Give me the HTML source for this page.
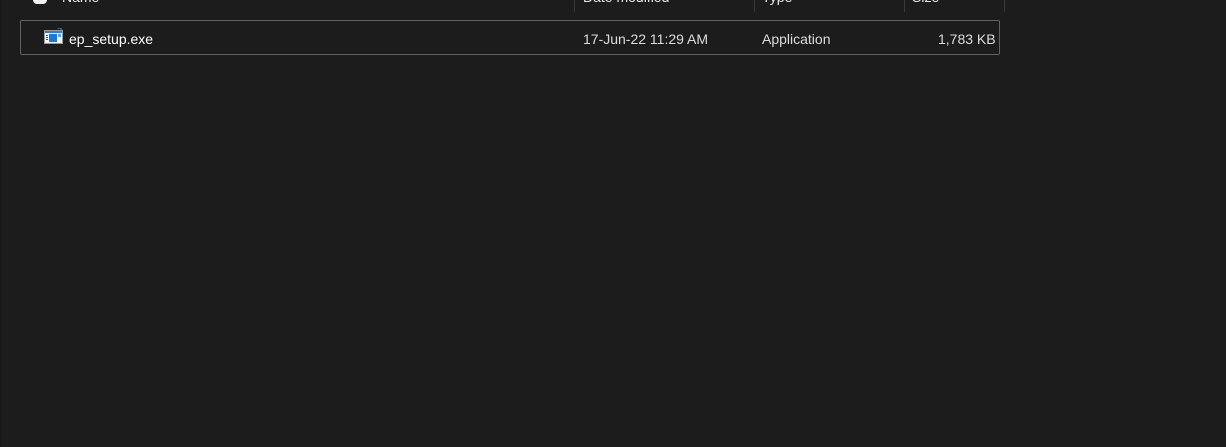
<!DOCTYPE html>
<html><head><style>
html,body{margin:0;padding:0;width:1226px;height:447px;overflow:hidden;background:#1c1c1c;font-family:"Liberation Sans",sans-serif;color:#fff;}
.strip{position:absolute;left:0;top:0;width:2px;height:447px;background:#191919;}
.h{position:absolute;top:-11px;font-size:14px;color:#e8e8e8;}
.sep{position:absolute;top:0;width:1px;height:12px;background:#3a3a3a;}
.cb{position:absolute;left:33px;top:-10px;width:14px;height:14px;border-radius:4px;background:#f2f2f2;}
.row{position:absolute;left:20px;top:20px;width:978px;height:33px;border:1px solid #616161;border-radius:2px;}
.t{position:absolute;top:30px;font-size:14px;line-height:18px;}
</style></head><body>
<div class="strip"></div>
<div class="cb"></div>
<div class="h" style="left:62px">Name</div>
<div class="h" style="left:583px">Date modified</div>
<div class="h" style="left:762px">Type</div>
<div class="h" style="left:912px">Size</div>
<div class="sep" style="left:574px"></div>
<div class="sep" style="left:754px"></div>
<div class="sep" style="left:904px"></div>
<div class="sep" style="left:1004px"></div>
<div class="row"></div>
<svg style="position:absolute;left:44px;top:28px" width="20" height="17" viewBox="0 0 20 17">
<rect x="0.5" y="2.5" width="18" height="13" fill="#f4f4f4" stroke="#9a9a9a"/>
<rect x="1" y="3" width="17" height="2" fill="#2f7fd8"/>
<rect x="5" y="6" width="8" height="8" fill="#1e78d6"/>
<rect x="2" y="7" width="2" height="1" fill="#555"/><rect x="2" y="9" width="2" height="1" fill="#555"/><rect x="2" y="11" width="2" height="1" fill="#555"/>
<rect x="14" y="6" width="3" height="3" fill="#5aa0e8"/>
<path d="M13 0 L17 0 L17 3" stroke="#3d8fe0" fill="none"/>
</svg>
<div class="t" style="left:69px">ep_setup.exe</div>
<div class="t" style="left:583px;color:#dcdcdc">17-Jun-22 11:29 AM</div>
<div class="t" style="left:762px;color:#dcdcdc">Application</div>
<div class="t" style="left:938px;color:#dcdcdc">1,783 KB</div>
</body></html>
